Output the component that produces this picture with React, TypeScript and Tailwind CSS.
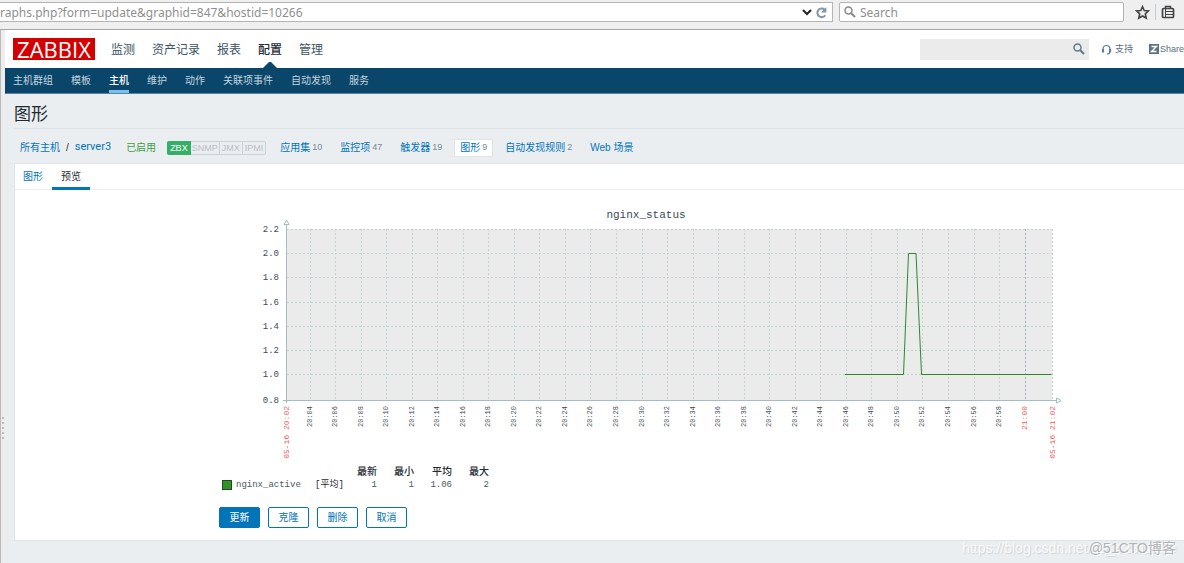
const mainMenu = ["监测", "资产记录", "报表", "配置", "管理"];
const subMenu = ["主机群组", "模板", "主机", "维护", "动作", "关联项事件", "自动发现", "服务"];

const hostLinks = [
  { label: "应用集", count: 10 },
  { label: "监控项", count: 47 },
  { label: "触发器", count: 19 },
  { label: "图形", count: 9 },
  { label: "自动发现规则", count: 2 },
  { label: "Web 场景" },
];

const yLabels = ["2.2", "2.0", "1.8", "1.6", "1.4", "1.2", "1.0", "0.8"];
const yLines = [34, 58, 82, 107, 131, 155, 179, 205];

// one tick every two minutes, 20:04 to 21:00
const xTicks = Array.from({ length: 29 }, (_, i) => {
  const minute = 4 + i * 2;
  return {
    x: Math.floor(91 + i * 25.54),
    label: minute === 60 ? "21:00" : `20:${String(minute).padStart(2, "0")}`,
    hour: minute === 60,
  };
});

function SearchIcon({ className }: { className: string }) {
  return (
    <svg className={className} viewBox="0 0 12 12" fill="none" stroke="currentColor">
      <circle cx="4.5" cy="4.5" r="3.5" strokeWidth="1.5" />
      <path d="M7 7l4 4" strokeWidth="2.2" />
    </svg>
  );
}

function BrowserBar() {
  return (
    <div className="flex h-[30px] items-start border-b border-[#a8a8a8] bg-[#efefef] pt-[2px] font-['Noto_Sans',sans-serif] text-[12px] text-[#8f8f8f]">
      <div className="flex h-5 min-w-0 flex-1 items-center border border-l-0 border-[#b4b4b4] bg-white pr-1">
        <input
          aria-label="Address"
          className="min-w-0 flex-1 bg-transparent pt-px outline-none"
          defaultValue="raphs.php?form=update&graphid=847&hostid=10266"
        />
        <svg className="mr-[2px] h-3 w-3" viewBox="0 0 12 12" fill="none" stroke="#222" strokeWidth="2">
          <path d="M2 4l4 4 4-4" />
        </svg>
        <svg className="h-[13px] w-[13px]" viewBox="0 0 12 12" fill="none" stroke="#8496a8">
          <path d="M9.5 8.5A4 4 0 1 1 8.8 3.2" strokeWidth="1.9" />
          <path d="M10.5 1v5h-5z" fill="#8496a8" stroke="none" />
        </svg>
      </div>
      <div className="ml-[6px] flex h-5 w-[285px] items-center rounded-[2px] border border-[#b4b4b4] bg-white pl-1">
        <SearchIcon className="h-3 w-3 text-[#888]" />
        <input
          aria-label="Search the web"
          className="ml-1 min-w-0 flex-1 bg-transparent pt-px outline-none placeholder:text-[#8f8f8f]"
          placeholder="Search"
        />
      </div>
      <button aria-label="Bookmark" className="ml-[11px] flex h-5 items-center text-[#444]">
        <svg className="h-[15px] w-[15px]" viewBox="0 0 14 14" fill="none" stroke="currentColor" strokeWidth="1.5">
          <path d="M7 1.5l1.6 3.6 4 .4-3 2.7.9 4L7 10.200l-3.500 2 .9-4-3-2.700 4-.4z" />
        </svg>
      </button>
      <span className="mx-[5px] mt-[2px] h-4 w-px bg-[#c3cdd6]" />
      <button aria-label="Bookmarks list" className="mr-[9px] flex h-5 items-center text-[#444]">
        <svg className="h-[14px] w-[14px]" viewBox="0 0 14 14" fill="none" stroke="currentColor">
          <path d="M4.5 3V1.5h5V3" strokeWidth="1.5" />
          <rect x="1.5" y="3.5" width="11" height="9" rx="1" strokeWidth="1.7" />
          <path d="M4 6.500h8M4 9.500h8M4.500 4v8" />
        </svg>
      </button>
    </div>
  );
}

function Header() {
  return (
    <header>
      <div className="flex h-[38px] items-center bg-white pl-2">
        <a
          href="#"
          className="flex h-[22px] w-[82px] items-center justify-center bg-[#d40000] font-['Open_Sans',sans-serif] text-[22px] leading-none font-medium text-white"
        >
          ZABBIX
        </a>
        <nav className="ml-4 flex h-full gap-[17px] text-[12px] text-[#3c5563]">
          {mainMenu.map((item) => (
            <a
              key={item}
              href="#"
              className={
                item === "配置"
                  ? "relative flex items-center pt-[2px] font-medium text-[#1f2c33]"
                  : "flex items-center pt-[2px]"
              }
            >
              {item}
              {item === "配置" && (
                <svg className="absolute bottom-0 left-[5px] h-[6px] w-[14px]" viewBox="0 0 14 6">
                  <path d="M0 6L6 0h2l6 6z" fill="#0a466a" />
                </svg>
              )}
            </a>
          ))}
        </nav>
        <div className="ml-auto flex h-[21px] w-[169px] items-center bg-[#ebebeb] pr-1">
          <input aria-label="搜索" className="min-w-0 flex-1 bg-transparent px-1 outline-none" />
          <button aria-label="提交搜索" className="text-[#5f7d8e]">
            <SearchIcon className="h-3 w-3" />
          </button>
        </div>
        <a href="#" className="ml-3 flex items-center gap-[3px] text-[9px] text-[#5a707c]">
          <svg className="h-[11px] w-[11px]" viewBox="0 0 11 11" fill="none" stroke="#5f7d8e">
            <path d="M2 7V5a3.5 3.5 0 0 1 7 0v2M9 7.500c0 1.500-1 2.500-3 2.500" strokeWidth="1.2" />
            <path d="M2 5v3.500M9 5v3.500" strokeWidth="2.2" />
          </svg>
          <span className="pt-px">支持</span>
        </a>
        <a href="#" className="ml-4 flex items-center gap-px text-[9px] text-[#5a707c]">
          <svg className="h-[10px] w-[10px]" viewBox="0 0 10 10">
            <rect width="10" height="10" fill="#5a7585" />
            <path d="M2.5 2.5h5l-5 5h5" fill="none" stroke="#fff" strokeWidth="1.4" />
          </svg>
          <span className="pt-px">Share</span>
        </a>
      </div>
      <nav className="flex h-[26px] gap-[18px] border-b border-[#5c8199] bg-[#0a466a] pl-2 text-[10px] text-[#c4d5df]">
        {subMenu.map((item) => (
          <a
            key={item}
            href="#"
            className={
              item === "主机"
                ? "flex items-center border-b-[3px] border-[#79c1f0] pt-[3px] font-medium text-white"
                : "flex items-center"
            }
          >
            {item}
          </a>
        ))}
      </nav>
    </header>
  );
}

function HostBar() {
  return (
    <div className="flex h-[34px] items-center pt-[3px] pl-[6px] text-[10px] text-[#0275b8]">
      <a href="#">所有主机</a>
      <span className="mx-[6px] text-[#1f2c33]">/</span>
      <a href="#" className="font-['Roboto',sans-serif] text-[11px]">server3</a>
      <span className="ml-[15px] text-[#429e47]">已启用</span>
      <div className="ml-[11px] flex h-[14px] rounded-[2px] border border-[#c9d2d6] text-[9px] leading-[13px] text-[#b6c0c5]">
        <span className="-m-px mr-0 rounded-l-[2px] bg-[#34af67] px-[3px] leading-[15px] text-white">ZBX</span>
        <span className="px-px">SNMP</span>
        <span className="border-l border-[#c9d2d6] px-[2px]">JMX</span>
        <span className="border-l border-[#c9d2d6] px-[2px]">IPMI</span>
      </div>
      <div className="ml-2 flex gap-[6px]">
        {hostLinks.map(({ label, count }) => (
          <a
            key={label}
            href="#"
            className={
              label === "图形"
                ? "flex h-[18px] items-center gap-[2px] border border-[#dfe4e7] bg-white px-[5px]"
                : "flex h-[18px] items-center gap-[2px] px-[6px]"
            }
          >
            {label}
            {count && <span className="pt-px text-[9px] text-[#768d99]">{count}</span>}
          </a>
        ))}
      </div>
    </div>
  );
}

function Chart() {
  return (
    <svg
      width="860"
      height="270"
      viewBox="0 0 860 270"
      className="block font-['Liberation_Mono',monospace]"
      role="img"
      aria-label="nginx_status"
    >
      <text x="427" y="23" textAnchor="middle" fontSize="11" fill="#3c4c55">
        nginx_status
      </text>
      <rect x="68" y="34" width="765" height="171" fill="#ebebeb" />
      <g stroke="#c3d2d2" strokeDasharray="2 2" shapeRendering="crispEdges">
        {yLines.slice(0, 7).map((y) => (
          <line key={y} x1="68" x2="833" y1={y + 0.5} y2={y + 0.5} />
        ))}
        {xTicks.map(({ x, hour }) => (
          <line key={x} x1={x + 0.5} x2={x + 0.5} y1="34" y2="205" stroke={hour ? "#9fb0b8" : undefined} />
        ))}
        <line x1="833.5" x2="833.5" y1="34" y2="205" />
      </g>
      <g stroke="#a4bcc5" fill="#fff">
        <path d="M67.5 30V208M64 205.5H837" />
        <path d="M65 29.5l2.5-4.5 2.5 4.5zM837.5 203v5l4.5-2.5z" />
      </g>
      <g fontSize="9" fill="#3c4c55" textAnchor="end">
        {yLabels.map((label, i) => (
          <text key={label} x="60" y={yLines[i] + 3}>
            {label}
          </text>
        ))}
      </g>
      <g textAnchor="end">
        {xTicks.map(({ x, label, hour }) => (
          <text
            key={label}
            transform={`translate(${x + 2} 211) rotate(-90)`}
            fontSize={hour ? 8 : 7}
            fill={hour ? "#e85c5c" : "#3c4c55"}
          >
            {label}
          </text>
        ))}
        <text transform="translate(70 211) rotate(-90)" fontSize="8" fill="#e85c5c">
          05-16 20:02
        </text>
        <text transform="translate(836 211) rotate(-90)" fontSize="8" fill="#e85c5c">
          05-16 21:02
        </text>
      </g>
      <path d="M626 179.5h58.5l5-121h7.5l5.5 121h130" fill="none" stroke="#2a8a2a" />
    </svg>
  );
}

function Legend() {
  return (
    <table className="mt-[2px] ml-[3px] font-['Liberation_Mono','Noto_Sans_CJK_SC',monospace] text-[9px] leading-3 text-[#4a5961]">
      <thead>
        <tr className="text-[10px] text-[#1f2c33]">
          <td />
          <td />
          <th className="w-[33px] text-right font-medium">最新</th>
          <th className="w-[37px] text-right font-medium">最小</th>
          <th className="w-[38px] text-right font-medium">平均</th>
          <th className="w-[37px] text-right font-medium">最大</th>
        </tr>
      </thead>
      <tbody>
        <tr>
          <td className="w-[93px]">
            <span className="flex items-center gap-1">
              <span className="h-[10px] w-[10px] border border-[#1d4d1a] bg-[#339128]" />
              nginx_active
            </span>
          </td>
          <td className="w-[29px] whitespace-nowrap text-[#1f2c33]">[平均]</td>
          <td className="text-right">1</td>
          <td className="text-right">1</td>
          <td className="text-right">1.06</td>
          <td className="text-right">2</td>
        </tr>
      </tbody>
    </table>
  );
}

export default function App() {
  return (
    <div className="relative flex min-h-screen flex-col overflow-hidden bg-[#ebeef0] font-['Liberation_Sans','Noto_Sans_CJK_SC',sans-serif]">
      <BrowserBar />
      <div className="flex flex-1">
        <div className="flex w-[5px] shrink-0 flex-col items-center justify-center gap-[3px] border-l border-[#b9b9b9] bg-[#eeecec] pt-[262px]">
          {[0, 1, 2, 3, 4].map((dot) => (
            <span key={dot} className="h-[2px] w-[2px] bg-[#bbb]" />
          ))}
        </div>
        <div className="min-w-0 flex-1">
          <Header />
          <main className="pb-[22px] pl-[9px]">
            <h1 className="flex h-[35px] items-center border-b border-[#dfe4e7] pt-[7px] text-[17px] text-[#1f2c33]">图形</h1>
            <HostBar />
            <section className="border border-r-0 border-[#dfe4e7] bg-white">
              <div className="flex h-[26px] border-b border-[#ebeef0] text-[10px]">
                <button className="px-2 text-[#0275b8]">图形</button>
                <button className="-mb-px ml-px border-b-[3px] border-[#0275b8] px-[9px] pt-px text-[#1f2c33]">预览</button>
              </div>
              <form className="pt-[5px] pb-3 pl-[204px]">
                <Chart />
                <Legend />
                <div className="mt-4 flex gap-2 text-[10px]">
                  <button type="button" className="h-[21px] w-[41px] rounded-[2px] border border-[#0275b8] bg-[#0275b8] text-white">
                    更新
                  </button>
                  {["克隆", "删除", "取消"].map((label) => (
                    <button
                      key={label}
                      type="button"
                      className="h-[21px] w-[41px] rounded-[2px] border border-[#0275b8] bg-white text-[#0275b8]"
                    >
                      {label}
                    </button>
                  ))}
                </div>
              </form>
            </section>
          </main>
        </div>
      </div>
      <div className="absolute right-2 bottom-[5px] text-[14px] leading-5">
        <span className="absolute right-0 bottom-0 text-[#f8f9fa] [text-shadow:1px_1px_1px_#cfd3d5]">
          https://blog.csdn.net/qq_42311209
        </span>
        <span className="relative text-[#b0b4b6] [text-shadow:1px_1px_0_#fff]">@51CTO博客</span>
      </div>
    </div>
  );
}
